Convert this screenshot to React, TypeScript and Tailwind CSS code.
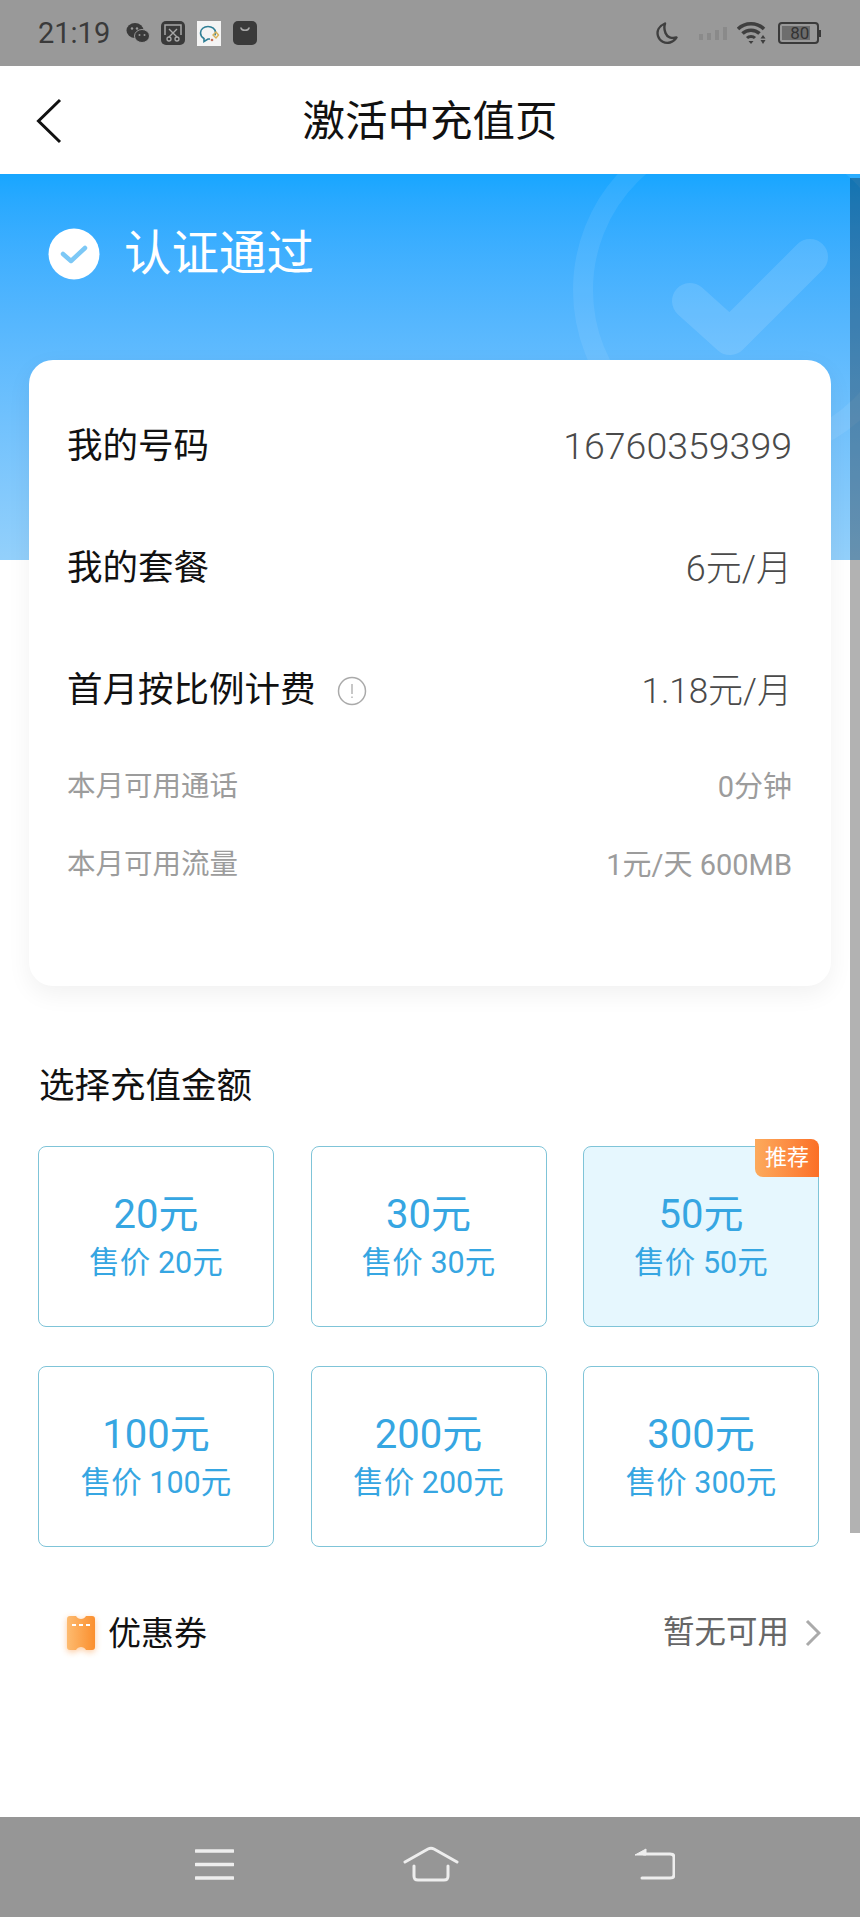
const amounts = [
  { face: '20元', price: '售价 20元' },
  { face: '30元', price: '售价 30元' },
  { face: '50元', price: '售价 50元', recommended: true },
  { face: '100元', price: '售价 100元' },
  { face: '200元', price: '售价 200元' },
  { face: '300元', price: '售价 300元' },
]

function StatusBar() {
  return (
    <div className="h-[66px] shrink-0 bg-[#999999] flex items-center text-[#3a3a3a]">
      <span className="ml-[38px] text-[29px] leading-none">21:19</span>
      {/* wechat */}
      <svg className="ml-[16px]" width="24" height="22" viewBox="0 0 24 22">
        <ellipse cx="9" cy="8.5" rx="8.5" ry="7.5" fill="#3a3a3a" />
        <ellipse cx="16" cy="14" rx="7.5" ry="6.5" fill="#3a3a3a" stroke="#999999" strokeWidth="1" />
        <circle cx="6" cy="6.5" r="1.2" fill="#999999" />
        <circle cx="11" cy="6.5" r="1.2" fill="#999999" />
        <circle cx="13.5" cy="13" r="1" fill="#999999" />
        <circle cx="18.5" cy="13" r="1" fill="#999999" />
      </svg>
      {/* screenshot tool */}
      <svg className="ml-[11px]" width="24" height="24" viewBox="0 0 24 24" fill="none">
        <rect width="24" height="24" rx="5" fill="#3a3a3a" />
        <path d="M4 14V4h16v10" stroke="#a8a8a8" strokeWidth="1.5" />
        <path d="M8 8l8 8M16 8l-8 8" stroke="#a8a8a8" strokeWidth="1.4" />
        <circle cx="8" cy="18" r="2" stroke="#a8a8a8" strokeWidth="1.3" />
        <circle cx="16" cy="18" r="2" stroke="#a8a8a8" strokeWidth="1.3" />
      </svg>
      {/* chat app */}
      <svg className="ml-[12px]" width="24" height="25" viewBox="0 0 24 25" fill="none">
        <rect width="24" height="25" fill="#f4f4f4" />
        <path d="M7 17.5C4.5 16 3.5 14 3.5 12 3.5 8 7 5.5 11 5.5s7.5 2.5 7.5 6c0 1-.3 2-.8 2.8" stroke="#2f7f96" strokeWidth="1.6" />
        <path d="M7 17v3.500l4-2.500h2" stroke="#2f7f96" strokeWidth="1.6" />
        <path d="M19 11l2.500 3-2.500 3-3-3z" stroke="#d9b25a" strokeWidth="1.4" />
        <circle cx="15" cy="19" r="1.300" fill="#c4705a" />
      </svg>
      {/* shopping bag */}
      <svg className="ml-[12px]" width="24" height="24" viewBox="0 0 24 24" fill="none">
        <rect width="24" height="24" rx="5" fill="#3a3a3a" />
        <path d="M8 7c.8 3 7.200 3 8 0" stroke="#a8a8a8" strokeWidth="1.600" strokeLinecap="round" />
      </svg>

      {/* moon */}
      <svg className="ml-[399px]" width="23" height="23" viewBox="0 0 23 23" fill="none">
        <path d="M9 1.500C3 4 .5 9 2 14c1.500 5 7 8 12 6.500 3-.8 5-2.500 6.500-5-5 1.500-9.500-.5-11-4.500C8.300 8 8 4.500 9 1.500z" stroke="#3f3f3f" strokeWidth="2.400" strokeLinejoin="round" />
      </svg>
      {/* signal bars */}
      <svg className="ml-[20px]" width="28" height="14" viewBox="0 0 28 14" fill="#8a8a8a">
        <rect x="0" y="8" width="4" height="6" />
        <rect x="8" y="7" width="4" height="7" />
        <rect x="16" y="4" width="4" height="10" />
        <rect x="24" y="1" width="4" height="13" />
      </svg>
      {/* wifi */}
      <svg className="ml-[10px]" width="30" height="23" viewBox="0 0 30 23" fill="none">
        <path d="M1 7c7-7 19-7 26 0" stroke="#3f3f3f" strokeWidth="3.500" />
        <path d="M5.500 11.500c4.500-4.500 12.500-4.500 17 0" stroke="#3f3f3f" strokeWidth="3.500" />
        <path d="M10 16c2-2 6-2 8 0" stroke="#3f3f3f" strokeWidth="3" />
        <path d="M11.500 19h5L14 22z" fill="#3f3f3f" />
        <path d="M26 13l2.500 3.500h-5zM23.500 18h5L26 22z" fill="#3f3f3f" />
      </svg>
      {/* battery */}
      <div className="ml-[11px] flex items-center">
        <div className="relative w-[41px] h-[22px] border-2 border-[#3a3a3a] rounded-[4px] flex items-center justify-center overflow-hidden">
          <div className="absolute left-[2px] top-[2px] bottom-[2px] w-[28px] bg-[#6d6d6d]" />
          <span className="relative text-[17px] leading-none text-[#333333] pl-[2px]">80</span>
        </div>
        <div className="w-[2px] h-[7px] bg-[#3a3a3a]" />
      </div>
    </div>
  )
}

function NavBar() {
  return (
    <div className="relative h-[108px] shrink-0 bg-white flex items-center justify-center pt-[5px]">
      <svg className="absolute left-[36px] top-[32px]" width="26" height="46" viewBox="0 0 26 46" fill="none">
        <path d="M24 2L2.500 23 24 44" stroke="#111111" strokeWidth="3" />
      </svg>
      <h1 className="text-[42.5px] leading-none text-[#111111]">激活中充值页</h1>
    </div>
  )
}

function Row({ label, value, info, valueClass }: { label: string; value: string; info?: boolean; valueClass: string }) {
  return (
    <div className="h-[122px] flex items-center justify-between pt-[2px]">
      <div className="flex items-center">
        <span className="text-[35.5px] leading-none text-[#111111]">{label}</span>
        {info && (
          <svg className="ml-[21px]" width="30" height="30" viewBox="0 0 30 30" fill="none">
            <circle cx="15" cy="15" r="13.500" stroke="#aaaaaa" strokeWidth="1.500" />
            <path d="M15 8v10M15 20.500v1.500" stroke="#aaaaaa" strokeWidth="1.300" />
          </svg>
        )}
      </div>
      <span className={`leading-none font-light text-[#4a4a4a] ${valueClass}`}>{value}</span>
    </div>
  )
}

function SmallRow({ label, value }: { label: string; value: string }) {
  return (
    <div className="h-[72px] flex items-center justify-between leading-none text-[#9c9c9c]">
      <span className="text-[28.5px]">{label}</span>
      <span className="text-[29px]">{value}</span>
    </div>
  )
}

export default function App() {
  return (
    <div
      className="relative w-[860px] h-[1917px] overflow-hidden bg-white flex flex-col"
      style={{ fontFamily: '"Roboto", "Noto Sans CJK SC", sans-serif' }}
    >
      <StatusBar />
      <NavBar />

      {/* header banner */}
      <div className="relative h-[386px] shrink-0 overflow-hidden bg-gradient-to-b from-[#17a6ff] to-[#93d0fb] pl-[48px] pt-[54px]">
        <svg className="absolute left-0 top-0" width="860" height="386" viewBox="0 0 860 386" fill="none">
          <circle cx="746" cy="116" r="163" stroke="#ffffff" strokeOpacity="0.08" strokeWidth="20" />
          <path d="M690 127l40 36 80-80" stroke="#ffffff" strokeOpacity="0.12" strokeWidth="36" strokeLinecap="round" strokeLinejoin="round" />
        </svg>
        <div className="relative flex items-center">
          <svg width="52" height="52" viewBox="0 0 52 52" fill="none">
            <circle cx="26" cy="26" r="25.500" fill="#ffffff" />
            <path d="M15 26l8 7 14-13" stroke="#7cc8f6" strokeWidth="4.500" strokeLinecap="round" strokeLinejoin="round" />
          </svg>
          <span className="ml-[24px] pt-[2px] text-[47.5px] leading-none text-white">认证通过</span>
        </div>
      </div>

      {/* plan details */}
      <div className="relative -mt-[200px] ml-[29px] w-[802px] rounded-[24px] bg-white shadow-[0_8px_24px_rgba(0,0,0,0.06)] pt-[25px] pb-[85px] pl-[38px] pr-[39px]">
        <Row label="我的号码" value="16760359399" valueClass="text-[37.5px]" />
        <Row label="我的套餐" value="6元/月" valueClass="text-[36px]" />
        <Row label="首月按比例计费" value="1.18元/月" info valueClass="text-[35px]" />
        <div className="flex flex-col gap-[6px]">
          <SmallRow label="本月可用通话" value="0分钟" />
          <SmallRow label="本月可用流量" value="1元/天 600MB" />
        </div>
      </div>

      <h2 className="mt-[76px] mb-[34px] ml-[39px] h-[50px] flex items-center text-[35.5px] leading-none font-normal text-[#111111]">
        选择充值金额
      </h2>

      <div className="ml-[38px] grid grid-cols-[repeat(3,236px)] gap-x-[36.5px] gap-y-[39px]">
        {amounts.map((item) => (
          <div
            key={item.face}
            className={`relative h-[181px] rounded-[8px] border border-[#7fc4d8] flex flex-col items-center justify-center text-[#36a6e2] ${
              item.recommended ? 'bg-[#e6f7fe]' : 'bg-white'
            }`}
          >
            {item.recommended && (
              <div className="absolute -top-[8px] -right-[1px] w-[64px] h-[38px] rounded-tr-[8px] rounded-bl-[8px] bg-gradient-to-r from-[#fcaa5c] to-[#fb6f26] flex items-center justify-center text-[22px] leading-none text-white">
                推荐
              </div>
            )}
            <span className="text-[40px] leading-[46px]">{item.face}</span>
            <span className="text-[30.5px] leading-[36px] mt-[7px]">{item.price}</span>
          </div>
        ))}
      </div>

      {/* coupons */}
      <div className="mt-[56px] h-[60px] flex items-center justify-between pl-[66px] pr-[39px]">
        <div className="flex items-center">
          <svg className="drop-shadow-[0_2px_3px_rgba(251,143,46,0.45)]" width="30" height="36" viewBox="0 0 30 36">
            <defs>
              <linearGradient id="ticket" x1="0" x2="1" y1="0" y2="0">
                <stop offset="0" stopColor="#fdbb70" />
                <stop offset="1" stopColor="#fb8f2e" />
              </linearGradient>
            </defs>
            <path d="M4 1h6c1 2 3 3 5 3s4-1 5-3h6c2 0 3 1 3 3v28c0 2-1 3-3 3h-6c-1-2-3-3-5-3s-4 1-5 3H4c-2 0-3-1-3-3V4c0-2 1-3 3-3z" fill="url(#ticket)" />
            <path d="M6 10h4M13 10h4M20 10h4" stroke="#ffffff" strokeWidth="2" />
          </svg>
          <span className="ml-[12px] text-[33px] leading-none text-[#111111]">优惠券</span>
        </div>
        <div className="flex items-center">
          <span className="text-[31.5px] leading-none text-[#666666]">暂无可用</span>
          <svg className="ml-[16px]" width="16" height="28" viewBox="0 0 16 28" fill="none">
            <path d="M2 2l12 12L2 26" stroke="#aaaaaa" strokeWidth="3" />
          </svg>
        </div>
      </div>

      {/* system navigation */}
      <div className="mt-auto h-[100px] shrink-0 bg-[#969696] flex items-center pb-[6px]">
        <svg className="ml-[195px]" width="39" height="31" viewBox="0 0 39 31" fill="none">
          <path d="M1 2h37M1 15.500h37M1 29h37" stroke="#eeeeee" strokeWidth="3.500" strokeLinecap="round" />
        </svg>
        <svg className="ml-[169px]" width="56" height="36" viewBox="0 0 56 36" fill="none">
          <path d="M2 16L25 3c2-1 4-1 6 0l23 13" stroke="#eeeeee" strokeWidth="3" strokeLinecap="round" />
          <path d="M11 20v10c0 3 1 4 4 4h26c3 0 4-1 4-4V20" stroke="#eeeeee" strokeWidth="3" strokeLinecap="round" />
        </svg>
        <svg className="ml-[175px]" width="41" height="32" viewBox="0 0 41 32" fill="none">
          <path d="M1 7l11-6v6z" fill="#eeeeee" stroke="#eeeeee" strokeWidth="1" strokeLinejoin="round" />
          <path d="M10 6h26c3 0 4 1 4 3v18c0 2-1 3-4 3H8" stroke="#eeeeee" strokeWidth="3" strokeLinecap="round" />
        </svg>
      </div>

      {/* scroll indicator */}
      <div className="absolute right-0 top-[178px] w-[10px] h-[1355px] bg-black/30" />
    </div>
  )
}
